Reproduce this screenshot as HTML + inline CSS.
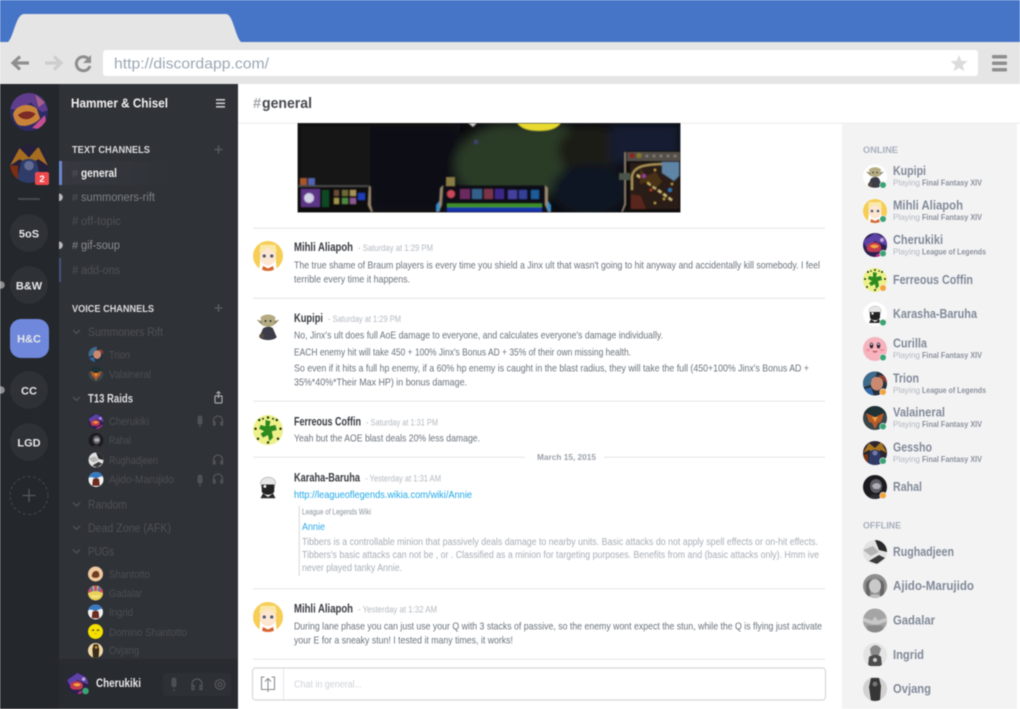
<!DOCTYPE html>
<html lang="en"><head><meta charset="utf-8"><title>Discord</title>
<style>
html,body{margin:0;padding:0;width:1020px;height:709px;overflow:hidden;background:#fff}
svg{display:block;position:absolute;left:0;top:0;filter:blur(.42px)}
text{font-family:"Liberation Sans",sans-serif;white-space:pre}
.b{font-weight:bold}
.msg{font-size:10.5px;fill:#6a727b}
.nm{font-size:12px;font-weight:bold;fill:#36393f}
.ts{font-size:9px;fill:#b4b9c0}
.ch{font-size:11.5px;fill:#4e5156}
.vu{font-size:11px;fill:#4b4e53}
.mn{font-size:12.5px;font-weight:bold;fill:#818a98}
.ms{font-size:8.5px;fill:#b2b6bd}
.mg{font-size:8.5px;font-weight:bold;fill:#8b919b}
.sv{font-size:11px;font-weight:bold;fill:#e6e7e8;text-anchor:middle}
.em{font-size:10px;fill:#a7adb5}
.ic{fill:none;stroke:#54575c;stroke-width:1.2;stroke-linecap:round;stroke-linejoin:round}
.chev{fill:none;stroke:#4f5257;stroke-width:1.3}
</style></head><body>
<svg width="1020" height="709" viewBox="0 0 1020 709" xmlns="http://www.w3.org/2000/svg">
<defs>
<clipPath id="c"><circle cx="12" cy="12" r="12"/></clipPath>
<clipPath id="gclip"><rect x="298" y="123.500" width="382" height="88.500"/></clipPath>
<filter id="bl" x="-10%" y="-10%" width="120%" height="120%"><feGaussianBlur stdDeviation="5"/></filter>
<filter id="bs" x="-5%" y="-5%" width="110%" height="110%"><feGaussianBlur stdDeviation=".55"/></filter>
<linearGradient id="act" x1="0" x2="1"><stop offset="0" stop-color="#36393f"/><stop offset="1" stop-color="#2f3237"/></linearGradient>
<symbol id="mihli" viewBox="0 0 24 24"><g clip-path="url(#c)"><rect width="24" height="24" fill="#fff"/><path d="M0 24V8C3 1 8 0 12 0s9 1 12 8v16h-5l-1-12-12 0-1 12z" fill="#f6cd55"/><ellipse cx="12" cy="12" rx="6.5" ry="7.5" fill="#fde6d2"/><path d="M5 9c3 0 6-2 7-5 1 3 4 5 7 5l-1-6H6z" fill="#f9e8a8"/><circle cx="9" cy="12" r="1.3" fill="#4b5a70"/><circle cx="15" cy="12" r="1.3" fill="#4b5a70"/><path d="M7 24l1-4 4 2 4-2 1 4z" fill="#d8662f"/></g></symbol>
<symbol id="kupipi" viewBox="0 0 24 24"><g clip-path="url(#c)"><rect width="24" height="24" fill="#fff"/><path d="M6 5c3-3 9-3 12 0l-1 6c-2 2-8 2-10 0z" fill="#b5ab82"/><path d="M3 7l4 1v3zM21 7l-4 1v3z" fill="#8c8768"/><circle cx="10" cy="8" r=".8" fill="#333"/><circle cx="14" cy="8" r=".8" fill="#333"/><path d="M8 14c3-2 6-2 8 0l3 7c-3 3-11 3-14 0z" fill="#3c3c48"/><circle cx="7" cy="20" r="2" fill="#5a4c3c"/></g></symbol>
<symbol id="ferr" viewBox="0 0 24 24"><g clip-path="url(#c)"><rect width="24" height="24" fill="#eef08a"/><g fill="#1f3d12"><circle cx="12" cy="2" r="1"/><circle cx="5" cy="4" r="1"/><circle cx="19" cy="4" r="1"/><circle cx="2" cy="11" r="1"/><circle cx="22" cy="11" r="1"/><circle cx="4" cy="19" r="1"/><circle cx="20" cy="19" r="1"/><circle cx="12" cy="22" r="1"/><circle cx="8" cy="3" r=".8"/><circle cx="16" cy="3" r=".8"/></g><path d="M10 4l4 1-1 4 5-1 1 4-4 1 1 5-3 3-1-5-4 2-2-3 3-2-4-2 1-3 4 1z" fill="#2c8a1e"/></g></symbol>
<symbol id="kara" viewBox="0 0 24 24"><g clip-path="url(#c)"><rect width="24" height="24" fill="#fff"/><path d="M6 9c0-6 12-7 12 0l-1 4H7z" fill="#e6e6e6" stroke="#aaa" stroke-width=".5"/><path d="M7 10h10v6c-3 3-7 3-10 0z" fill="#222"/><circle cx="9.500" cy="11.500" r="1.200" fill="#eee"/><path d="M8 17l4 3 4-3 2 4H6z" fill="#2a2a2a"/></g></symbol>
<symbol id="cher" viewBox="0 0 24 24"><g clip-path="url(#c)"><rect width="24" height="24" fill="#2b2050"/><path d="M0 8L12 0l12 6v7L12 8 3 14z" fill="#5d42a5"/><path d="M4 13c3-5 12-5 14 0 1 3-1 6-4 6l-7 0c-3-1-4-3-3-6z" fill="#c23a52"/><path d="M7 13c3-2 6-2 9 0-2 3-7 3-9 0z" fill="#f2a53c"/><path d="M14 21c3 0 6-2 8-5v8H12z" fill="#be2f8d"/><circle cx="19" cy="7" r="2" fill="#c7a3d9"/></g></symbol>
<symbol id="curi" viewBox="0 0 24 24"><g clip-path="url(#c)"><rect width="24" height="24" fill="#f6b3bd"/><ellipse cx="8.500" cy="8.500" rx="1.800" ry="3" fill="#3a2535"/><ellipse cx="15.500" cy="8.500" rx="1.800" ry="3" fill="#3a2535"/><circle cx="8.500" cy="7.200" r=".8" fill="#fff"/><circle cx="15.500" cy="7.200" r=".8" fill="#fff"/><ellipse cx="5" cy="13" rx="2" ry="1" fill="#ee8b9c"/><ellipse cx="19" cy="13" rx="2" ry="1" fill="#ee8b9c"/><path d="M10 14q2 2 4 0" stroke="#a33" fill="none"/></g></symbol>
<symbol id="trion" viewBox="0 0 24 24"><g clip-path="url(#c)"><rect width="24" height="24" fill="#24303e"/><path d="M0 0h14l-3 12-11 4z" fill="#3f6b8c"/><path d="M9 7c4-3 10-2 11 3 1 4-2 9-6 9-4 0-7-4-6-8z" fill="#cb8a70"/><path d="M0 18l8-2 3 8H0z" fill="#2f69a8"/><path d="M15 4h9v8z" fill="#8e4034"/></g></symbol>
<symbol id="vala" viewBox="0 0 24 24"><g clip-path="url(#c)"><rect width="24" height="24" fill="#39464a"/><path d="M0 0h24v7L12 12 0 7z" fill="#1e3236"/><path d="M3 7l9 4 9-4-3 9-3 1-3 6-3-6-3-1z" fill="#b65a28"/><path d="M9 11h6l-3 5z" fill="#e6a33d"/></g></symbol>
<symbol id="gess" viewBox="0 0 24 24"><g clip-path="url(#c)"><rect width="24" height="24" fill="#2b2530"/><path d="M0 12L6 2l6 5 6-6 6 11-6-3-6 3-6-3z" fill="#a9741f"/><path d="M7 11c2-3 8-3 10 0l2 13H5z" fill="#2f3a68"/><circle cx="12" cy="12" r="2.500" fill="#767da0"/><path d="M0 14l5-1 0 11H0z" fill="#7c3516"/></g></symbol>
<symbol id="rahal" viewBox="0 0 24 24"><g clip-path="url(#c)"><rect width="24" height="24" fill="#1c1c20"/><ellipse cx="13" cy="11" rx="6" ry="7" fill="#5f5e66"/><path d="M9 11c2-4 7-4 9 0l-2 3h-5z" fill="#aeaeb6"/><path d="M5 24c1-6 13-6 15 0z" fill="#2e2d36"/></g></symbol>
<symbol id="rugh" viewBox="0 0 24 24"><g clip-path="url(#c)"><rect width="24" height="24" fill="#e2e2e2"/><path d="M12 0h12v12l-8-2z" fill="#2a2a2a"/><path d="M0 10l10-4 6 6-8 4z" fill="#b4b4b4"/><path d="M6 21l10-6 6 3-8 6z" fill="#3a3a3a"/></g></symbol>
<symbol id="ajido" viewBox="0 0 24 24"><g clip-path="url(#c)"><rect width="24" height="24" fill="#8f8f8f"/><path d="M3 24V10C4 3 20 3 21 10v14h-4V12H7v12z" fill="#666"/><ellipse cx="12" cy="12" rx="6" ry="7" fill="#c9c9c9"/><path d="M5 24c2-5 12-5 14 0z" fill="#bdbdbd"/></g></symbol>
<symbol id="gada" viewBox="0 0 24 24"><g clip-path="url(#c)"><rect width="24" height="24" fill="#a5a5a5"/><path d="M0 9l9 3 3-4 3 4 9-3v4l-9 3H9l-9-3z" fill="#c8c8c8"/><path d="M4 17h16v7H4z" fill="#8a8a8a"/></g></symbol>
<symbol id="ingr" viewBox="0 0 24 24"><g clip-path="url(#c)"><rect width="24" height="24" fill="#e4e4e4"/><path d="M7 6c3-5 8-5 11 0l-2 6H8z" fill="#8a8a8a"/><path d="M6 14c3-3 10-3 12 0l1 9H5z" fill="#4c4c4c"/><circle cx="12" cy="17" r="2" fill="#ccc"/></g></symbol>
<symbol id="ovj" viewBox="0 0 24 24"><g clip-path="url(#c)"><rect width="24" height="24" fill="#d2d2d2"/><path d="M8 1h8l2 8-1 15H8L6 10z" fill="#363636"/><circle cx="12" cy="7" r="2.400" fill="#777"/></g></symbol>
<symbol id="shan" viewBox="0 0 24 24"><g clip-path="url(#c)"><rect width="24" height="24" fill="#f1c9a0"/><path d="M6 16c0-6 4-9 7-9s6 3 5 9l-3 2H9z" fill="#6e3e22"/></g></symbol>
<symbol id="gadc" viewBox="0 0 24 24"><g clip-path="url(#c)"><rect width="24" height="24" fill="#ead05a"/><path d="M0 0h7l1 9-8 3zM9 0h6l-1 9h-4zM17 0h7v12l-8-3z" fill="#c44f6a"/><path d="M5 0l3 9M19 0l-3 9" stroke="#4b82c0" stroke-width="3"/><path d="M6 14q6 5 12 0v5H6z" fill="#f4e78a"/></g></symbol>
<symbol id="ingc" viewBox="0 0 24 24"><g clip-path="url(#c)"><rect width="24" height="24" fill="#f1f1f1"/><path d="M0 0h24v8c-4-3-8 2-12 2S3 6 0 10z" fill="#3879c0"/><path d="M7 12c3-3 8-3 10 0l1 10H6z" fill="#6b2b20"/></g></symbol>
<symbol id="domi" viewBox="0 0 24 24"><g clip-path="url(#c)"><rect width="24" height="24" fill="#f5e100"/><path d="M6 11l2-2 2 2M14 11l2-2 2 2" stroke="#333" fill="none" stroke-width="1.200"/><path d="M10 15q2 1 4 0" stroke="#d08a00" fill="none"/></g></symbol>
<symbol id="ovjc" viewBox="0 0 24 24"><g clip-path="url(#c)"><rect width="24" height="24" fill="#f1d9a6"/><path d="M9 2h7l2 8-1 14H8L7 10z" fill="#3a2c1a"/><circle cx="13" cy="7" r="2.200" fill="#c8963d"/></g></symbol>
<symbol id="teemo" viewBox="0 0 24 24"><g clip-path="url(#c)"><rect width="24" height="24" fill="#2d2b66"/><path d="M4 0h16l4 11-4 1-7-6-7 5-6-1z" fill="#5f3d8c"/><path d="M16 1l6 5-4 3z" fill="#a5608a"/><path d="M2 13c2-6 11-7 15-3l2 6c-3 4-11 6-14 4-2-2-3-5-3-7z" fill="#c98339"/><path d="M5 14c3-3 8-3 11-1-2 4-8 5-11 1z" fill="#7c2a25"/><path d="M14 22l8-8 2 10z" fill="#c74e90"/></g></symbol>
<symbol id="hcg" viewBox="0 0 24 24"><g clip-path="url(#c)"><rect width="24" height="24" fill="#26203a"/><path d="M0 13L6 2l6 6 6-7 6 12-6-4-6 3-6-3z" fill="#a66d20"/><path d="M7 11c2-3 8-3 10 0l3 13H4z" fill="#2f3c6a"/><circle cx="12" cy="13" r="3" fill="#626c92"/><path d="M0 13l5 0 0 11H0z" fill="#7d2f12"/></g></symbol>
</defs>

<!-- browser chrome -->
<rect width="1020" height="42" fill="#4675c8"/>
<rect y="42" width="1020" height="42" fill="#e5e5e5"/>
<path d="M8 42C14 36 16 14 24 14H226C233 14 235 36 241 42Z" fill="#e5e5e5"/>
<path d="M29 63H14M20 56.500l-7 6.500 7 6.500" fill="none" stroke="#8f8f8f" stroke-width="3.200"/>
<path d="M45 63H60M54 56.500l7 6.500-7 6.500" fill="none" stroke="#cdcdcd" stroke-width="3.200"/>
<path d="M88 58.500A7 7 0 1 0 90 66" fill="none" stroke="#8e8e8e" stroke-width="3"/>
<path d="M91 55v8h-8z" fill="#8e8e8e"/>
<rect x="103" y="50" width="875" height="26" rx="3" fill="#fff"/>
<text x="114" y="68.500" font-size="15" fill="#9ba7b4" textLength="155" lengthAdjust="spacingAndGlyphs">http://discordapp.com/</text>
<path d="M959 55l2.300 5.800 6.200.4-4.800 4 1.600 6-5.300-3.300-5.300 3.300 1.600-6-4.800-4 6.200-.4z" fill="#dcdcdc"/>
<g fill="#8f8f8f"><rect x="992" y="55" width="15" height="3.500" rx="1"/><rect x="992" y="61.500" width="15" height="3.500" rx="1"/><rect x="992" y="68" width="15" height="3.500" rx="1"/></g>

<!-- server col -->
<rect y="84" width="59" height="625" fill="#24272b"/>
<use href="#teemo" x="10" y="93" width="38" height="38"/>
<use href="#hcg" x="10" y="145" width="38" height="38"/>
<rect x="35" y="172" width="14" height="13" rx="2" fill="#ee4a4d"/>
<text x="42" y="182" font-size="9.500" class="b" fill="#fff" text-anchor="middle">2</text>
<rect x="18" y="198" width="22" height="2" fill="#45484d"/>
<circle cx="29" cy="233" r="19" fill="#2e3136"/><text x="29" y="237.500" class="sv">5oS</text>
<circle cx="29" cy="285" r="19" fill="#2e3136"/><text x="29" y="289.500" class="sv">B&amp;W</text>
<rect x="10" y="319" width="39" height="39" rx="11" fill="#6f88dc"/><text x="29" y="342.500" class="sv">H&amp;C</text>
<circle cx="29" cy="390" r="19" fill="#2e3136"/><text x="29" y="394.500" class="sv">CC</text>
<circle cx="29" cy="442" r="19" fill="#2e3136"/><text x="29" y="446.500" class="sv">LGD</text>
<circle cx="29" cy="495.500" r="19" fill="none" stroke="#45484d" stroke-dasharray="3 2.500"/>
<path d="M29 489v13M22.500 495.500h13" stroke="#55585d" stroke-width="1.300"/>
<circle cx="1" cy="285" r="3.800" fill="#8c8e91"/><circle cx="1" cy="390" r="3.800" fill="#8c8e91"/>

<!-- channels col -->
<rect x="59" y="84" width="179" height="625" fill="#2f3237"/>
<text x="71" y="107.500" font-size="12.500" class="b" fill="#f0f0f0" textLength="97" lengthAdjust="spacingAndGlyphs">Hammer &amp; Chisel</text>
<g fill="#c9cacc"><rect x="216" y="99" width="9" height="1.600"/><rect x="216" y="102.500" width="9" height="1.600"/><rect x="216" y="106" width="9" height="1.600"/></g>
<text x="72" y="153" font-size="10" class="b" fill="#d8d9da" textLength="78" lengthAdjust="spacingAndGlyphs">TEXT CHANNELS</text>
<path d="M218.500 145.500v8M214.500 149.500h8M218.500 304v8M214.500 308h8" stroke="#55585d" stroke-width="1.600"/>
<rect x="62" y="161" width="118" height="24" fill="url(#act)"/>
<rect x="59" y="161" width="3" height="24" fill="#6d85cf"/>
<rect x="59" y="258" width="2" height="24" fill="#47527c"/>
<path d="M59 193.500a3.800 3.800 0 0 1 0 7.600zM59 241.500a3.800 3.800 0 0 1 0 7.600z" fill="#b9babc"/>
<text x="72" y="177" font-size="11" fill="#55585d">#</text><text x="81" y="177" font-size="11.500" class="b" fill="#eeeeee" textLength="36" lengthAdjust="spacingAndGlyphs">general</text>
<text x="72" y="201" font-size="11" fill="#55585d">#</text><text x="81" y="201" font-size="11.500" fill="#7e8186" textLength="74" lengthAdjust="spacingAndGlyphs">summoners-rift</text>
<text x="72" y="225" class="ch">#</text><text x="81" y="225" class="ch" textLength="40" lengthAdjust="spacingAndGlyphs">off-topic</text>
<text x="72" y="249" font-size="11" fill="#8b8e92">#</text><text x="81" y="249" font-size="11.500" fill="#8b8e92" textLength="39" lengthAdjust="spacingAndGlyphs">gif-soup</text>
<text x="72" y="274" class="ch">#</text><text x="81" y="274" class="ch" textLength="39" lengthAdjust="spacingAndGlyphs">add-ons</text>
<text x="72" y="312" font-size="10" class="b" fill="#d8d9da" textLength="82" lengthAdjust="spacingAndGlyphs">VOICE CHANNELS</text>

<path class="chev" d="M73 330l3.500 3.500 3.500-3.500M73 397l3.500 3.500 3.500-3.500M73 502.500l3.500 3.500 3.500-3.500M73 526l3.500 3.500 3.500-3.500M73 549.500l3.500 3.500 3.500-3.500"/>
<text x="88" y="336" class="ch" textLength="75" lengthAdjust="spacingAndGlyphs">Summoners Rift</text>
<text x="88" y="402.500" font-size="12" class="b" fill="#dcdddf" textLength="45" lengthAdjust="spacingAndGlyphs">T13 Raids</text>
<text x="88" y="508.500" class="ch" textLength="39" lengthAdjust="spacingAndGlyphs">Random</text>
<text x="88" y="532" class="ch" textLength="83" lengthAdjust="spacingAndGlyphs">Dead Zone (AFK)</text>
<text x="88" y="555.500" class="ch" textLength="26" lengthAdjust="spacingAndGlyphs">PUGs</text>

<use href="#trion" x="88.500" y="347" width="15" height="15"/><text x="109" y="358.500" class="vu" textLength="21" lengthAdjust="spacingAndGlyphs">Trion</text>
<use href="#vala" x="88.500" y="366.500" width="15" height="15"/><text x="109" y="378" class="vu" textLength="42" lengthAdjust="spacingAndGlyphs">Valaineral</text>
<use href="#cher" x="88.500" y="414" width="15" height="15"/><text x="109" y="425" class="vu" textLength="40" lengthAdjust="spacingAndGlyphs">Cherukiki</text>
<use href="#rahal" x="88.500" y="433" width="15" height="15"/><text x="109" y="444" class="vu" textLength="22" lengthAdjust="spacingAndGlyphs">Rahal</text>
<use href="#rugh" x="88.500" y="452.500" width="15" height="15"/><text x="109" y="464" class="vu" textLength="49" lengthAdjust="spacingAndGlyphs">Rughadjeen</text>
<use href="#ingc" x="88.500" y="472" width="15" height="15"/><text x="109" y="483" class="vu" textLength="65" lengthAdjust="spacingAndGlyphs">Ajido-Marujido</text>
<use href="#shan" x="88" y="566.500" width="15" height="15"/><text x="109" y="578" class="vu" textLength="41" lengthAdjust="spacingAndGlyphs">Shantotto</text>
<use href="#gadc" x="88" y="585.500" width="15" height="15"/><text x="109" y="597" class="vu" textLength="33" lengthAdjust="spacingAndGlyphs">Gadalar</text>
<use href="#ingc" x="88" y="604.500" width="15" height="15"/><text x="109" y="616" class="vu" textLength="24" lengthAdjust="spacingAndGlyphs">Ingrid</text>
<use href="#domi" x="88" y="624" width="15" height="15"/><text x="109" y="636" class="vu" textLength="78" lengthAdjust="spacingAndGlyphs">Domino Shantotto</text>
<use href="#ovjc" x="88" y="643" width="15" height="15"/><text x="109" y="654" class="vu" textLength="30" lengthAdjust="spacingAndGlyphs">Ovjang</text>

<!-- voice icons -->
<path d="M215 402v-6h7v6a1 1 0 0 1-1 1h-5a1 1 0 0 1-1-1zM218.500 398v-6M216.500 393.500l2-2 2 2" fill="none" stroke="#a5a7aa" stroke-width="1.200" stroke-linejoin="round"/>
<path d="M197.500 418a2.500 2.500 0 0 1 5 0v4.500a2.500 2.500 0 0 1-5 0z" fill="#4f5257"/><path d="M200 425.500v2" stroke="#4f5257" stroke-width="1.200"/>
<path class="ic" d="M213.500 423v-2.500a4.500 4.500 0 0 1 9 0v2.500M213.500 422h1.500v3h-1.500zM221 422h1.500v3H221z"/>
<path class="ic" d="M213.500 462v-2.500a4.500 4.500 0 0 1 9 0v2.500M213.500 461h1.500v3h-1.500zM221 461h1.500v3H221z"/>
<path d="M197.500 477a2.500 2.500 0 0 1 5 0v4.500a2.500 2.500 0 0 1-5 0z" fill="#4f5257"/><path d="M200 484.500v2" stroke="#4f5257" stroke-width="1.200"/>
<path class="ic" d="M213.500 481v-2.500a4.500 4.500 0 0 1 9 0v2.500M213.500 480h1.500v3h-1.500zM221 480h1.500v3H221z"/>

<!-- user bar -->
<rect x="59" y="659" width="179" height="50" fill="#282b30"/>
<use href="#cher" x="67" y="673" width="21" height="21"/>
<circle cx="85.500" cy="691" r="4" fill="#282b30"/><circle cx="85.500" cy="691" r="3.300" fill="#3ca374"/>
<text x="96" y="687" font-size="11.500" class="b" fill="#e8e8e9" textLength="45" lengthAdjust="spacingAndGlyphs">Cherukiki</text>
<rect x="163" y="673" width="68" height="23" rx="3" fill="#2d3035"/>
<path d="M171.500 680a2.500 2.500 0 0 1 5 0v5a2.500 2.500 0 0 1-5 0z" fill="#4c4f54"/><path d="M174 689v2.500" stroke="#4c4f54" stroke-width="1.200"/>
<path class="ic" d="M192 687v-3a5 5 0 0 1 10 0v3M192 685.500h2v4h-2zM200 685.500h2v4h-2z"/>
<circle cx="220" cy="684.500" r="4.800" class="ic"/><circle cx="220" cy="684.500" r="2" class="ic"/>

<!-- main header -->
<rect x="238" y="84" width="782" height="39" fill="#fff"/>
<rect x="238" y="122.500" width="782" height="1.500" fill="#f0f0f0"/>
<text x="253" y="108" font-size="14.500" class="b" fill="#a0a3a7">#</text>
<text x="262" y="108" font-size="14.500" class="b" fill="#47494e" textLength="50" lengthAdjust="spacingAndGlyphs">general</text>

<!-- game screenshot -->
<rect x="297.500" y="123" width="383" height="89.500" fill="#3a3a3c"/>
<rect x="298" y="123.500" width="382" height="88.500" fill="#0d0c10"/>
<g clip-path="url(#gclip)">
<g filter="url(#bl)">
<rect x="298" y="123" width="75" height="65" fill="#141212"/>
<rect x="370" y="123" width="90" height="90" fill="#0a0b14"/>
<ellipse cx="510" cy="165" rx="55" ry="42" fill="#2a3a26"/>
<ellipse cx="545" cy="140" rx="35" ry="18" fill="#2c3a28"/>
<ellipse cx="590" cy="150" rx="32" ry="24" fill="#1c1a18"/>
<ellipse cx="590" cy="190" rx="38" ry="26" fill="#0f1220"/>
<rect x="610" y="124" width="70" height="40" fill="#131c32"/>
</g>
<g filter="url(#bs)">
<path d="M517 123h44c-4 6-12 8-22 8s-18-2-22-8z" fill="#e8d92e"/>
<path d="M468 123h9l-4 4z" fill="#d5d6d6"/>
<circle cx="476" cy="142" r="2.500" fill="#3f3f6a"/>
<!-- left hud -->
<rect x="298" y="185.500" width="71" height="27" fill="#0e0e10"/>
<rect x="298" y="185" width="70" height="2" fill="#4a4a48"/>
<path d="M369 185l2 2v18l2 7h-2l-3-7z" fill="#9a8a70"/>
<rect x="300" y="178" width="7" height="7" fill="#a9572b"/><rect x="308" y="178" width="7" height="7" fill="#5464b5"/>
<rect x="301" y="189" width="19" height="18" fill="#5c3585"/><circle cx="309" cy="198" r="5" fill="#d5d2e8"/>
<rect x="322" y="190" width="7" height="17" fill="#0f4a20"/>
<rect x="334" y="190" width="5" height="6" fill="#6a4c38"/><rect x="342" y="190" width="6" height="6" fill="#6e6a38"/><rect x="350" y="190" width="6" height="6" fill="#a89258"/><rect x="334" y="198" width="5" height="6" fill="#a29548"/><rect x="342" y="198" width="6" height="6" fill="#4d8a40"/><rect x="350" y="198" width="6" height="6" fill="#8d5a90"/><rect x="358" y="193" width="7" height="7" fill="#1c3cb8"/>
<!-- center hud -->
<rect x="443" y="185.500" width="102" height="27" fill="#101014"/>
<rect x="446" y="177" width="9" height="9" fill="#8a7c44"/>
<path d="M443 185l-3 3-1 17-3 7h3l3-7z" fill="#9a8a70"/><path d="M545 185l3 3 0 17 3 7h-3l-3-7z" fill="#9a8a70"/>
<path d="M436 205l3-4 1 10h-4zM551 205l-3-4-1 10h4z" fill="#2f8fd0"/>
<circle cx="451" cy="194" r="4" fill="#c9475a"/><rect x="460" y="189" width="10" height="10" fill="#6a2a60"/><rect x="472" y="189" width="10" height="10" fill="#35608a"/><rect x="484" y="189" width="9" height="10" fill="#7a3448"/><rect x="495" y="189" width="9" height="10" fill="#3e258a"/><rect x="508" y="190" width="9" height="9" fill="#443fa0"/><rect x="519" y="190" width="8" height="9" fill="#363f9a"/><rect x="531" y="190" width="8" height="9" fill="#1f5c9a"/>
<rect x="447" y="203.500" width="95" height="4" fill="#3f8f2c"/><rect x="447" y="207.500" width="95" height="5" fill="#1530a8"/>
<!-- minimap -->
<path d="M625 152l4-1h51v62h-55z" fill="#0f0d0c"/>
<path d="M625 152v52l-3 8" stroke="#a08e78" stroke-width="1.600" fill="none"/>
<rect x="627" y="152" width="53" height="9" fill="#554f48"/>
<circle cx="632" cy="155.500" r="2.600" fill="#8a2020"/><circle cx="639" cy="155.500" r="2.600" fill="#86782a"/>
<g fill="#8e887c"><circle cx="647" cy="156" r="1.300"/><circle cx="654" cy="156" r="1.300"/><circle cx="661" cy="156" r="1.300"/><circle cx="668" cy="156" r="1.300"/><circle cx="675" cy="156" r="1.300"/></g>
<rect x="630" y="163" width="49" height="46" fill="#2c1f14"/>
<path d="M632 190v-14c2-9 10-12 36-12" stroke="#b09a5c" stroke-width="2" fill="none"/>
<path d="M637 175l36 26" stroke="#d7c27a" stroke-width="2.400" stroke-dasharray="4 2.500"/>
<path d="M640 168l6 8 10-4 6 10-6 6-8-6-8 2z" fill="#4a3318"/>
<path d="M662 162h17v14l-5 5-12-8z" fill="#5e85a6"/><path d="M631 194l10 2 5 13h-15z" fill="#59251f"/>
<g fill="#c9a94d"><circle cx="655" cy="170" r="1.200"/><circle cx="648" cy="183" r="1.200"/><circle cx="664" cy="199" r="1.200"/><circle cx="655" cy="203" r="1.200"/><circle cx="672" cy="184" r="1.200"/></g>
<circle cx="644" cy="176" r="2" fill="#a03aa0"/><rect x="619" y="173" width="11" height="7" fill="#48544a"/>
<circle cx="670" cy="190" r="2" fill="#2e77b8"/><circle cx="651" cy="190" r="1.500" fill="#ad3a20"/>
</g>
</g>

<!-- dividers -->
<g fill="#ececed"><rect x="253" y="227.500" width="572" height="1.500"/><rect x="253" y="297.500" width="572" height="1.500"/><rect x="253" y="400.500" width="572" height="1.500"/><rect x="253" y="456.500" width="272" height="1.500"/><rect x="604" y="456.500" width="221" height="1.500"/><rect x="253" y="588" width="572" height="1.500"/><rect x="253" y="658.500" width="572" height="1.500"/></g>
<text x="537" y="460" font-size="8.500" class="b" fill="#9ba1aa" textLength="59" lengthAdjust="spacingAndGlyphs">March 15, 2015</text>

<!-- messages -->
<use href="#mihli" x="253" y="241" width="30" height="30"/>
<text x="294" y="251" class="nm" textLength="59" lengthAdjust="spacingAndGlyphs">Mihli Aliapoh</text>
<text x="358" y="251" class="ts" textLength="75" lengthAdjust="spacingAndGlyphs">- Saturday at 1:29 PM</text>
<text x="294" y="268.500" class="msg" textLength="526" lengthAdjust="spacingAndGlyphs">The true shame of Braum players is every time you shield a Jinx ult that wasn't going to hit anyway and accidentally kill somebody. I feel</text>
<text x="294" y="282.500" class="msg" textLength="116" lengthAdjust="spacingAndGlyphs">terrible every time it happens.</text>

<use href="#kupipi" x="253" y="311" width="30" height="30"/>
<text x="294" y="322" class="nm" textLength="29" lengthAdjust="spacingAndGlyphs">Kupipi</text>
<text x="328" y="322" class="ts" textLength="73" lengthAdjust="spacingAndGlyphs">- Saturday at 1:29 PM</text>
<text x="294" y="338.500" class="msg" textLength="369" lengthAdjust="spacingAndGlyphs">No, Jinx's ult does full AoE damage to everyone, and calculates everyone's damage individually.</text>
<text x="294" y="355.500" class="msg" textLength="337" lengthAdjust="spacingAndGlyphs">EACH enemy hit will take 450 + 100% Jinx's Bonus AD + 35% of their own missing health.</text>
<text x="294" y="371.500" class="msg" textLength="515" lengthAdjust="spacingAndGlyphs">So even if it hits a full hp enemy, if a 60% hp enemy is caught in the blast radius, they will take the full (450+100% Jinx's Bonus AD +</text>
<text x="294" y="385.500" class="msg" textLength="173" lengthAdjust="spacingAndGlyphs">35%*40%*Their Max HP) in bonus damage.</text>

<use href="#ferr" x="253" y="415" width="30" height="30"/>
<text x="294" y="425.500" class="nm" textLength="67" lengthAdjust="spacingAndGlyphs">Ferreous Coffin</text>
<text x="366" y="425.500" class="ts" textLength="72" lengthAdjust="spacingAndGlyphs">- Saturday at 1:31 PM</text>
<text x="294" y="441.500" class="msg" textLength="186" lengthAdjust="spacingAndGlyphs">Yeah but the AOE blast deals 20% less damage.</text>

<use href="#kara" x="253" y="472" width="30" height="30"/>
<text x="294" y="481.500" class="nm" textLength="66" lengthAdjust="spacingAndGlyphs">Karaha-Baruha</text>
<text x="365" y="481.500" class="ts" textLength="76" lengthAdjust="spacingAndGlyphs">- Yesterday at 1:31 AM</text>
<text x="294" y="498" font-size="10.500" fill="#21a8e8" textLength="178" lengthAdjust="spacingAndGlyphs">http://leagueoflegends.wikia.com/wiki/Annie</text>
<rect x="298.500" y="506" width="1.500" height="70" fill="#e2e3e5"/>
<text x="302" y="514.500" font-size="8" fill="#8a9098" textLength="69" lengthAdjust="spacingAndGlyphs">League of Legends Wiki</text>
<text x="302" y="530" font-size="10.500" fill="#2aaaea" textLength="23" lengthAdjust="spacingAndGlyphs">Annie</text>
<text x="302" y="545" class="em" textLength="516" lengthAdjust="spacingAndGlyphs">Tibbers is a controllable minion that passively deals damage to nearby units. Basic attacks do not apply spell effects or on-hit effects.</text>
<text x="302" y="558" class="em" textLength="517" lengthAdjust="spacingAndGlyphs">Tibbers's basic attacks can not be , or . Classified as a minion for targeting purposes. Benefits from and (basic attacks only). Hmm ive</text>
<text x="302" y="571" class="em" textLength="100" lengthAdjust="spacingAndGlyphs">never played tanky Annie.</text>

<use href="#mihli" x="253" y="602" width="30" height="30"/>
<text x="294" y="612.500" class="nm" textLength="59" lengthAdjust="spacingAndGlyphs">Mihli Aliapoh</text>
<text x="358" y="612.500" class="ts" textLength="79" lengthAdjust="spacingAndGlyphs">- Yesterday at 1:32 AM</text>
<text x="294" y="629.500" class="msg" textLength="528" lengthAdjust="spacingAndGlyphs">During lane phase you can just use your Q with 3 stacks of passive, so the enemy wont expect the stun, while the Q is flying just activate</text>
<text x="294" y="643.500" class="msg" textLength="219" lengthAdjust="spacingAndGlyphs">your E for a sneaky stun! I tested it many times, it works!</text>

<!-- input -->
<rect x="252.500" y="668" width="573" height="32" rx="3" fill="#fff" stroke="#d7d8da" stroke-width="1.200"/>
<rect x="283" y="668.500" width="1" height="31" fill="#e6e7e8"/>
<path d="M264.500 677h-3v12.500h13V677h-3M268 692v-13M265 681.500l3-3 3 3" fill="none" stroke="#8a8e94" stroke-width="1.100"/>
<text x="294" y="687.500" font-size="10" fill="#cfd2d6" textLength="68" lengthAdjust="spacingAndGlyphs">Chat in general...</text>

<!-- members -->
<rect x="842" y="124" width="175" height="585" fill="#f3f3f4"/>
<text x="863" y="153" font-size="9" class="b" fill="#a7aebb" textLength="35" lengthAdjust="spacingAndGlyphs">ONLINE</text>

<use href="#kupipi" x="863" y="164.500" width="24" height="24"/><circle cx="883" cy="185" r="3.600" fill="#f3f3f4"/><circle cx="883" cy="185" r="3" fill="#3ca374"/>
<text x="893" y="175" class="mn" textLength="33" lengthAdjust="spacingAndGlyphs">Kupipi</text>
<text x="893" y="185.500" class="ms" textLength="27" lengthAdjust="spacingAndGlyphs">Playing</text><text x="922" y="185.500" class="mg" textLength="60" lengthAdjust="spacingAndGlyphs">Final Fantasy XIV</text>

<use href="#mihli" x="863" y="199" width="24" height="24"/><circle cx="883" cy="219" r="3.600" fill="#f3f3f4"/><circle cx="883" cy="219" r="3" fill="#3ca374"/>
<text x="893" y="209.500" class="mn" textLength="70" lengthAdjust="spacingAndGlyphs">Mihli Aliapoh</text>
<text x="893" y="220" class="ms" textLength="27" lengthAdjust="spacingAndGlyphs">Playing</text><text x="922" y="220" class="mg" textLength="60" lengthAdjust="spacingAndGlyphs">Final Fantasy XIV</text>

<use href="#cher" x="863" y="233" width="24" height="24"/><circle cx="883" cy="253.500" r="3.600" fill="#f3f3f4"/><circle cx="883" cy="253.500" r="3" fill="#3ca374"/>
<text x="893" y="244" class="mn" textLength="50" lengthAdjust="spacingAndGlyphs">Cherukiki</text>
<text x="893" y="254.500" class="ms" textLength="27" lengthAdjust="spacingAndGlyphs">Playing</text><text x="922" y="254.500" class="mg" textLength="64" lengthAdjust="spacingAndGlyphs">League of Legends</text>

<use href="#ferr" x="863" y="268" width="24" height="24"/><circle cx="883" cy="288" r="3.600" fill="#f3f3f4"/><circle cx="883" cy="288" r="3" fill="#f3a33b"/>
<text x="893" y="284" class="mn" textLength="80" lengthAdjust="spacingAndGlyphs">Ferreous Coffin</text>

<use href="#kara" x="863" y="302" width="24" height="24"/><circle cx="883" cy="322.500" r="3.600" fill="#f3f3f4"/><circle cx="883" cy="322.500" r="3" fill="#3ca374"/>
<text x="893" y="318" class="mn" textLength="84" lengthAdjust="spacingAndGlyphs">Karasha-Baruha</text>

<use href="#curi" x="863" y="337" width="24" height="24"/><circle cx="883" cy="357.500" r="3.600" fill="#f3f3f4"/><circle cx="883" cy="357.500" r="3" fill="#3ca374"/>
<text x="893" y="347.500" class="mn" textLength="34" lengthAdjust="spacingAndGlyphs">Curilla</text>
<text x="893" y="358" class="ms" textLength="27" lengthAdjust="spacingAndGlyphs">Playing</text><text x="922" y="358" class="mg" textLength="60" lengthAdjust="spacingAndGlyphs">Final Fantasy XIV</text>

<use href="#trion" x="863" y="371.500" width="24" height="24"/><circle cx="883" cy="392" r="3.600" fill="#f3f3f4"/><circle cx="883" cy="392" r="3" fill="#f3a33b"/>
<text x="893" y="382.500" class="mn" textLength="26" lengthAdjust="spacingAndGlyphs">Trion</text>
<text x="893" y="393" class="ms" textLength="27" lengthAdjust="spacingAndGlyphs">Playing</text><text x="922" y="393" class="mg" textLength="64" lengthAdjust="spacingAndGlyphs">League of Legends</text>

<use href="#vala" x="863" y="406" width="24" height="24"/><circle cx="883" cy="426.500" r="3.600" fill="#f3f3f4"/><circle cx="883" cy="426.500" r="3" fill="#3ca374"/>
<text x="893" y="416.500" class="mn" textLength="52" lengthAdjust="spacingAndGlyphs">Valaineral</text>
<text x="893" y="427" class="ms" textLength="27" lengthAdjust="spacingAndGlyphs">Playing</text><text x="922" y="427" class="mg" textLength="60" lengthAdjust="spacingAndGlyphs">Final Fantasy XIV</text>

<use href="#gess" x="863" y="441" width="24" height="24"/><circle cx="883" cy="461" r="3.600" fill="#f3f3f4"/><circle cx="883" cy="461" r="3" fill="#3ca374"/>
<text x="893" y="451.500" class="mn" textLength="39" lengthAdjust="spacingAndGlyphs">Gessho</text>
<text x="893" y="462" class="ms" textLength="27" lengthAdjust="spacingAndGlyphs">Playing</text><text x="922" y="462" class="mg" textLength="60" lengthAdjust="spacingAndGlyphs">Final Fantasy XIV</text>

<use href="#rahal" x="863" y="475" width="24" height="24"/><circle cx="883" cy="495.500" r="3.600" fill="#f3f3f4"/><circle cx="883" cy="495.500" r="3" fill="#f3a33b"/>
<text x="893" y="491" class="mn" textLength="29" lengthAdjust="spacingAndGlyphs">Rahal</text>

<text x="863" y="528.500" font-size="9" class="b" fill="#a7aebb" textLength="38" lengthAdjust="spacingAndGlyphs">OFFLINE</text>
<use href="#rugh" x="863" y="540" width="24" height="24"/><text x="893" y="556" class="mn" textLength="61" lengthAdjust="spacingAndGlyphs">Rughadjeen</text>
<use href="#ajido" x="863" y="574" width="24" height="24"/><text x="893" y="590" class="mn" textLength="81" lengthAdjust="spacingAndGlyphs">Ajido-Marujido</text>
<use href="#gada" x="863" y="608.500" width="24" height="24"/><text x="893" y="624.500" class="mn" textLength="42" lengthAdjust="spacingAndGlyphs">Gadalar</text>
<use href="#ingr" x="863" y="643" width="24" height="24"/><text x="893" y="659" class="mn" textLength="31" lengthAdjust="spacingAndGlyphs">Ingrid</text>
<use href="#ovj" x="863" y="677" width="24" height="24"/><text x="893" y="693" class="mn" textLength="38" lengthAdjust="spacingAndGlyphs">Ovjang</text>
</svg>
</body></html>
